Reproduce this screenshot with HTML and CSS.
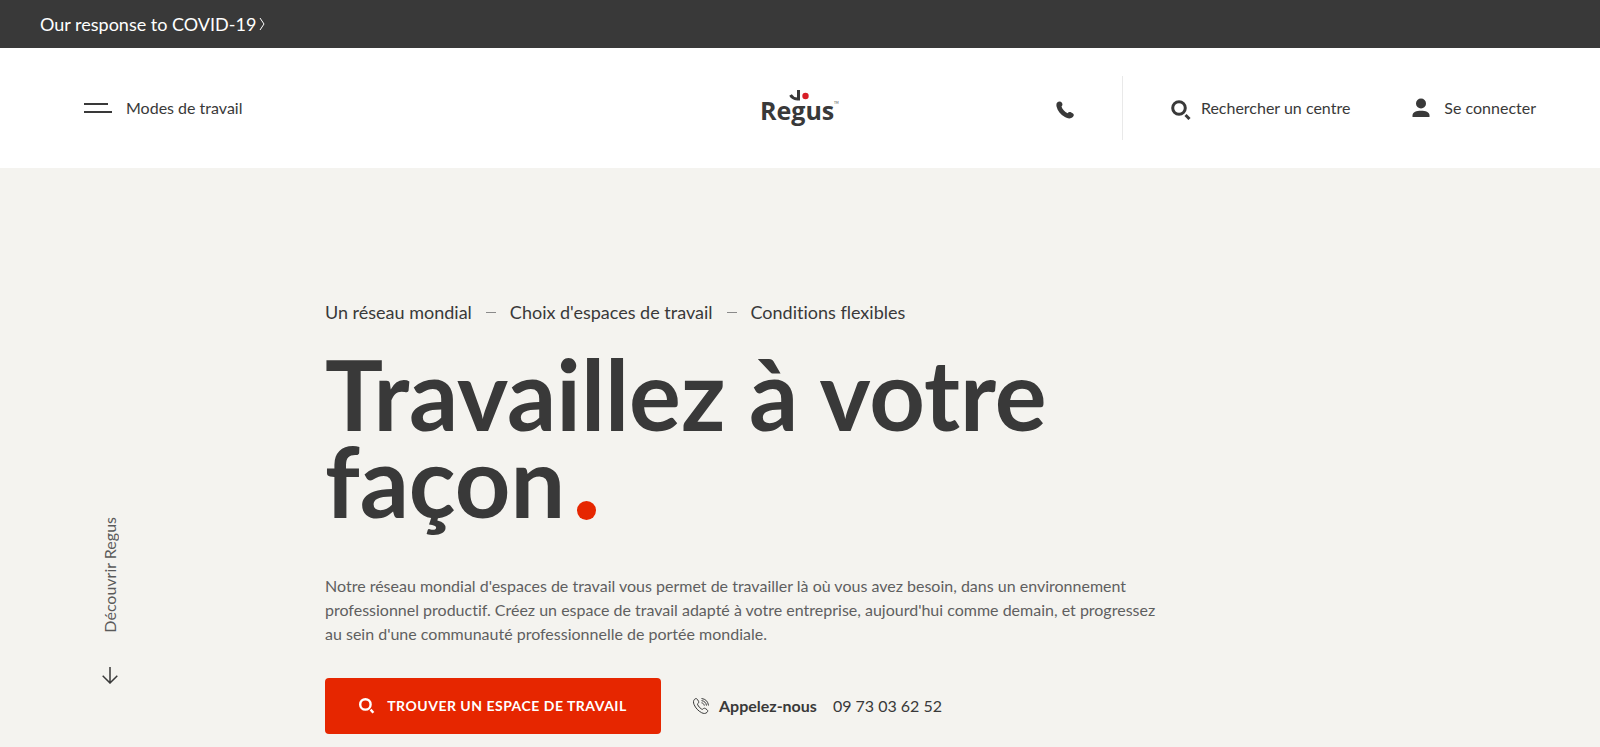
FILE: index.html
```
<!DOCTYPE html>
<html lang="fr">
<head>
  <meta charset="UTF-8">
  <meta name="viewport" content="width=device-width, initial-scale=1">
  <title>Regus</title>
  <link rel="stylesheet" href="styles.css">
</head>
<body>
  <div class="notice">
    <a href="#covid">Our response to COVID-19
      <svg class="chevron" width="6" height="14" viewBox="0 0 6 14"><path d="M1 1l4 6-4 6"/></svg>
    </a>
  </div>

  <header class="header">
    <button class="menu-button" type="button">
      <span class="burger"></span>
      Modes de travail
    </button>
    <a class="logo" href="#" aria-label="Regus">
      <svg width="78" height="42" viewBox="0 0 78 42">
        <text class="logo-text" x="-1" y="31">Regus</text>
        <path class="logo-check" d="M29.500 6c1.500 2.500 4 3.800 6.500 4M37.500 1v10.500"/>
        <circle class="logo-dot" cx="44.500" cy="7" r="3.200"/>
        <text class="logo-tm" x="73" y="15">TM</text>
      </svg>
    </a>
    <nav class="header-links">
      <a class="phone-link" href="#phone" aria-label="Appelez-nous">
        <svg width="18" height="18" viewBox="0 0 18 18"><path class="fill" d="M1.200 1.600C2.500.200 4.600 0 5.700 1.500c1.100 1.600 1 2.800-.200 4 .700 2.600 3.200 5.500 6.100 6.700.800-1.300 2.400-1.400 3.700-.700l1.700 1c1.200.900 1 2.400-.200 3.600-1.700 1.700-5 1.800-7.900 0C4.500 13.500 1.600 9.700.600 5.700.200 4 .300 2.600 1.200 1.600z"/></svg>
      </a>
      <a class="search-link" href="#centres">
        <svg width="20" height="20" viewBox="0 0 20 20"><circle cx="8" cy="8" r="6.300"/><path d="M14.500 15l4 4"/></svg>
        Rechercher un centre
      </a>
      <a class="login-link" href="#login">
        <svg width="18" height="20" viewBox="0 0 18 20"><circle class="fill" cx="9" cy="5.500" r="5"/><path class="fill" d="M.500 19v-1.500C.500 14 4.500 12.800 9 12.800s8.500 1.200 8.500 4.700V19z"/></svg>
        Se connecter
      </a>
    </nav>
  </header>

  <main class="hero">
    <a class="discover" href="#discover">
      <span>Découvrir Regus</span>
      <svg width="16" height="17" viewBox="0 0 16 17"><path d="M8 0v16M.700 8.700L8 16l7.300-7.300"/></svg>
    </a>
    <div class="hero-content">
      <ul class="benefits">
        <li>Un réseau mondial</li>
        <li>Choix d'espaces de travail</li>
        <li>Conditions flexibles</li>
      </ul>
      <h1>Travaillez à votre façon<span class="dot"></span></h1>
      <p class="intro">Notre réseau mondial d'espaces de travail vous permet de travailler là où vous avez besoin, dans un environnement professionnel productif. Créez un espace de travail adapté à votre entreprise, aujourd'hui comme demain, et progressez au sein d'une communauté professionnelle de portée mondiale.</p>
      <div class="actions">
        <button class="find-button" type="button">
          <svg width="16" height="16" viewBox="0 0 20 20"><circle cx="8" cy="8" r="6.500"/><path d="M14.500 14.500l3.500 4"/></svg>
          Trouver un espace de travail
        </button>
        <a class="call" href="tel:+33973036252">
          <svg width="16" height="16" viewBox="0 0 16 16"><path d="M1.400 1.500C2.300.400 3.600.300 4.300 1.300l1.200 1.900c.500.900.200 1.700-.600 2.200-.500.400-.500.900-.200 1.500.900 1.800 2.200 3.200 3.900 4.200.600.400 1.100.300 1.500-.200.600-.700 1.400-.900 2.200-.400l1.700 1.200c1 .700.900 1.800 0 2.700-1.400 1.300-3.300 1.400-5.400.300C5.200 12.900 2.600 10 1.100 6.600.200 4.500.300 2.800 1.400 1.500zM8.500 4.800c1.600.300 2.500 1.200 2.800 2.800M8.500 2.600c2.900.400 4.600 2.100 5 5M8.500.500c4.100.500 6.500 2.900 7 7"/></svg>
          <strong>Appelez-nous</strong>
          <span>09 73 03 62 52</span>
        </a>
      </div>
    </div>
  </main>
</body>
</html>
```
FILE: styles.css
```
* {
  box-sizing: border-box;
}
body {
  margin: 0;
  background-color: #f4f3ef;
  color: #393939;
  font-family: Lato, "Open Sans", sans-serif;
  font-size: 16px;
  line-height: 24px;
  font-variant-ligatures: none;
}
a {
  color: inherit;
  text-decoration: none;
}
button {
  padding: 0;
  border: none;
  background: none;
  color: inherit;
  font: inherit;
  cursor: pointer;
}
svg {
  flex: none;
  fill: none;
  stroke: #393939;
}
.fill {
  fill: #393939;
  stroke: none;
}

/* Top notice */
.notice {
  padding: 12px 40px;
  background-color: #393939;
  color: #fff;
  font-size: 18px;
}
.notice a {
  display: inline-flex;
  align-items: center;
  gap: 3px;
}
.chevron {
  stroke: #fff;
}

/* Header */
.header {
  display: grid;
  grid-template-columns: 1fr auto 1fr;
  align-items: center;
  height: 120px;
  padding: 0 64px 0 84px;
  background-color: #fff;
}
.menu-button {
  display: flex;
  align-items: center;
  gap: 14px;
}
.burger {
  width: 28px;
  height: 10px;
  background: linear-gradient(#393939, #393939) 0 0 / 24px 2px no-repeat,
    linear-gradient(#393939, #393939) 0 100% / 28px 2px no-repeat;
}
.logo {
  display: block;
  margin-right: 20px;
  padding-top: 4px;
}
.logo svg {
  display: block;
}
.logo-text {
  fill: #393939;
  stroke: none;
  font-family: "Open Sans", sans-serif;
  font-size: 25px;
  font-weight: 700;
}
.logo-check {
  stroke-width: 3;
}
.logo-dot {
  fill: #d81e27;
  stroke: none;
}
.logo-tm {
  fill: #393939;
  stroke: none;
  font-size: 3px;
}
.header-links {
  display: flex;
  justify-content: flex-end;
  align-items: center;
}
.header-links a {
  display: flex;
  align-items: center;
}
.phone-link {
  height: 64px;
  padding-right: 48px;
  border-right: 1px solid #e9e9e9;
}
.phone-link svg,
.search-link svg {
  margin-top: 4px;
}
.search-link {
  gap: 10px;
  padding-left: 48px;
}
.search-link svg {
  stroke-width: 3;
}
.login-link {
  gap: 14px;
  padding-left: 62px;
}

/* Hero */
.hero {
  display: grid;
  grid-template-columns: 325px 1fr;
  align-items: start;
}
.discover {
  display: flex;
  flex-direction: column;
  align-items: center;
  gap: 34px;
  width: 220px;
  padding-top: 349px;
  color: #5a5a5a;
}
.discover span {
  writing-mode: vertical-rl;
  transform: rotate(180deg);
}
.discover svg {
  stroke-width: 1.5;
}
.hero-content {
  max-width: 838px;
  padding: 132px 0 12px;
}
.benefits {
  display: flex;
  margin: 0;
  padding: 0;
  list-style: none;
  font-size: 18px;
}
.benefits li {
  display: flex;
  align-items: center;
}
.benefits li + li::before {
  content: "";
  width: 10px;
  height: 1px;
  margin: 0 14px;
  background-color: #8a8a8a;
}
h1 {
  margin: 26px 0 50px;
  font-size: 97px;
  font-weight: 700;
  line-height: 87px;
}
.dot {
  display: inline-block;
  width: 19px;
  height: 19px;
  margin-left: 12px;
  border-radius: 50%;
  background-color: #e62600;
  vertical-align: -2px;
}
.intro {
  margin: 0 0 32px;
  color: #5f5f5f;
}
.actions {
  display: flex;
  align-items: center;
  gap: 32px;
}
.find-button {
  display: flex;
  justify-content: center;
  align-items: center;
  gap: 12px;
  width: 336px;
  height: 56px;
  border-radius: 4px;
  background-color: #e62600;
  color: #fff;
  font-size: 14px;
  font-weight: 700;
  letter-spacing: 0.5px;
  text-transform: uppercase;
}
.find-button svg {
  stroke: #fff;
  stroke-width: 3;
}
.call {
  display: flex;
  align-items: center;
}
.call strong {
  margin: 0 16px 0 10px;
}
```
